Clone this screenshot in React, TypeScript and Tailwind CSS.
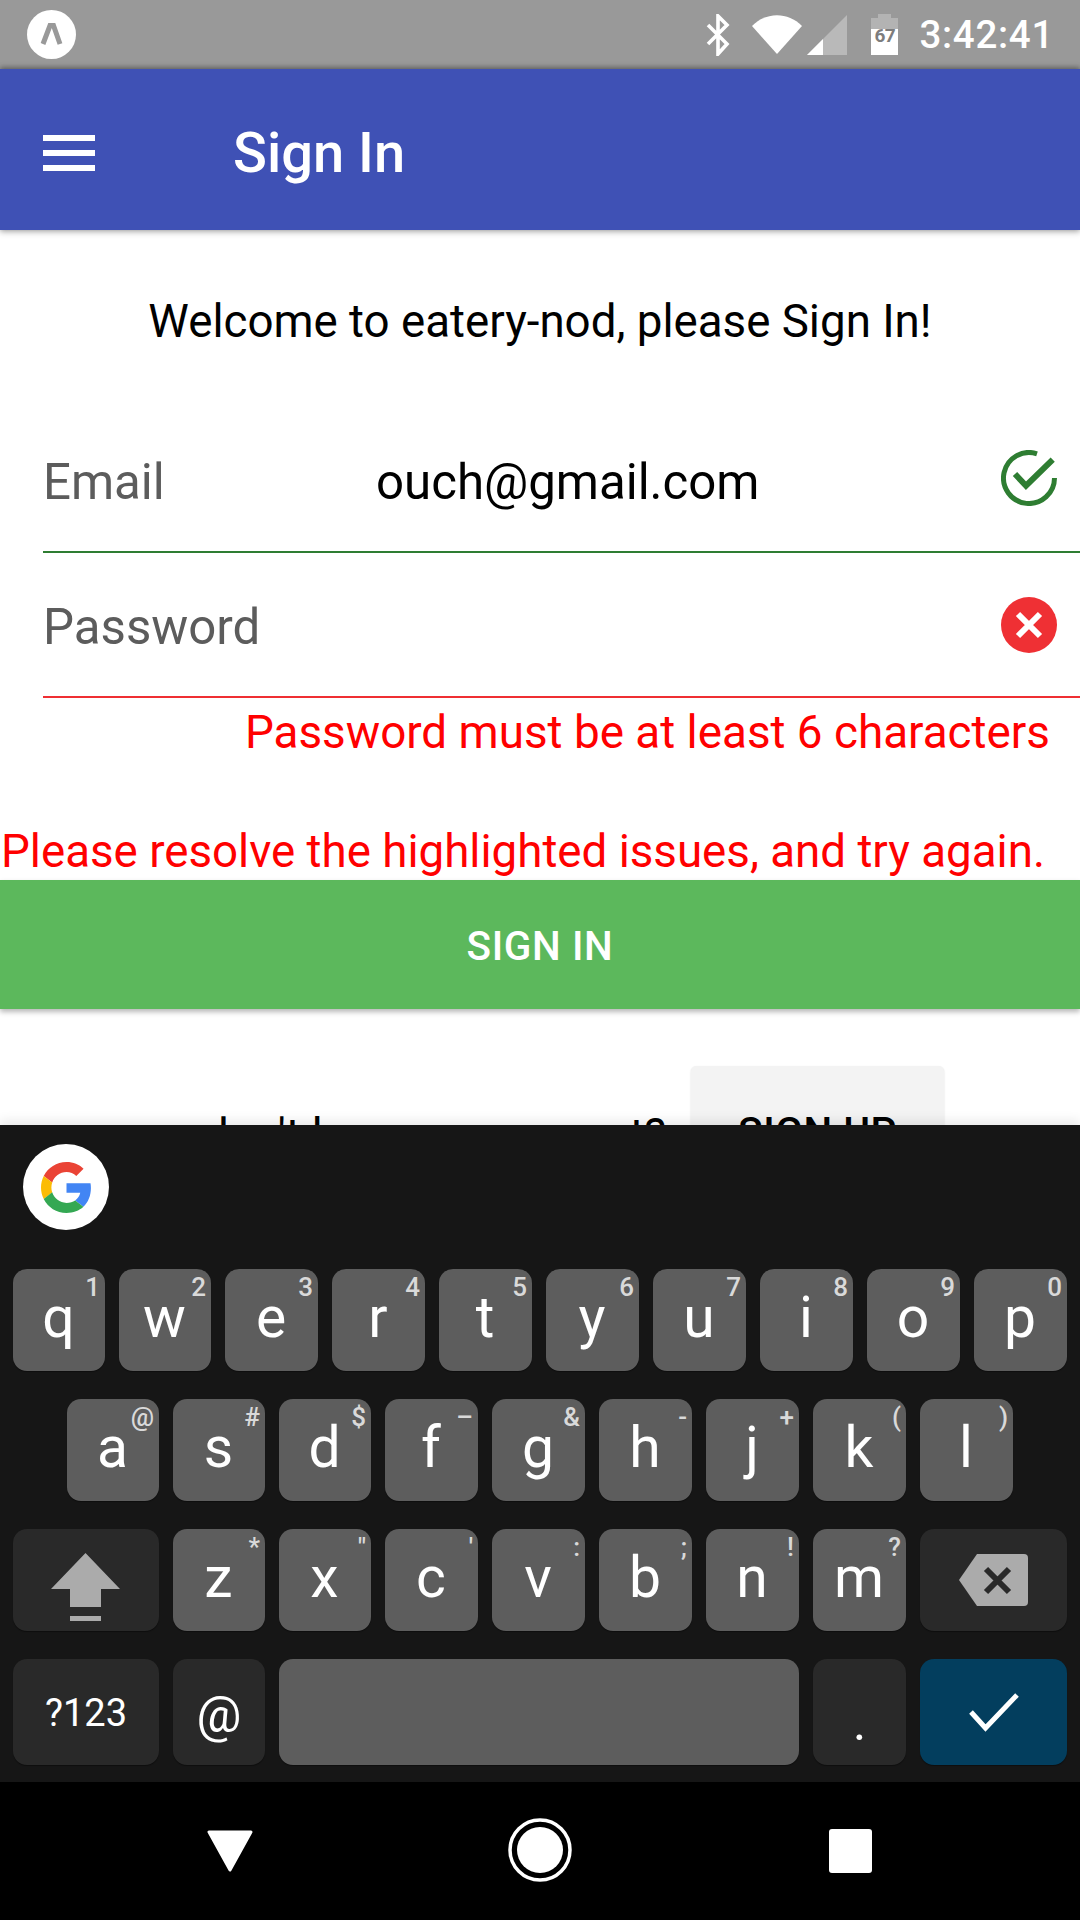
import React from "react";

type K = [string, string];
const row1: K[] = [["q","1"],["w","2"],["e","3"],["r","4"],["t","5"],["y","6"],["u","7"],["i","8"],["o","9"],["p","0"]];
const row2: K[] = [["a","@"],["s","#"],["d","$"],["f","–"],["g","&"],["h","-"],["j","+"],["k","("],["l",")"]];
const row3: K[] = [["z","*"],["x","\""],["c","'"],["v",":"],["b",";"],["n","!"],["m","?"]];
const narrow = "qwasdzx";

function LetterKey({ k }: { k: K }) {
  const w = narrow.includes(k[0]) ? "w-[92px]" : "w-[93px]";
  return (
    <div className={"relative h-[102px] shrink-0 rounded-[14px] bg-[#5d5d5d] shadow-[0_1px_1px_rgba(0,0,0,0.4)] flex items-center justify-center pb-[4px] pr-[1px] text-[57px] text-white " + w}>
      <span>{k[0]}</span>
      <span className="absolute top-[5px] right-[5px] text-[26px] leading-[26px] font-medium text-[#d9d9d9]">{k[1]}</span>
    </div>
  );
}

function FuncKey({ className, children }: { className: string; children: React.ReactNode }) {
  return (
    <div className={"shrink-0 rounded-[14px] shadow-[0_1px_1px_rgba(0,0,0,0.4)] flex items-center justify-center text-white " + className}>
      {children}
    </div>
  );
}

export default function App() {
  return (
    <div className="w-[1080px] h-[1920px] flex flex-col overflow-hidden bg-white font-['Roboto',sans-serif]">
      {/* status bar */}
      <div className="h-[69px] shrink-0 bg-[#999999] flex items-center pl-[27px] pr-[26px]">
        <svg width="49" height="49" viewBox="0 0 49 49" className="mb-[1px]">
          <circle cx="24.5" cy="24.5" r="24.5" fill="#fff" />
          <path d="M16 34 L23 15.5 H26.5 L33 34" fill="none" stroke="#999" strokeWidth="5" />
        </svg>
        <div className="flex-1" />
        <svg width="25" height="42" viewBox="0 0 25 42" className="mr-[21px]">
          <path d="M2 11 L21 30 L12 40 V2 L21 11 L2 30" fill="none" stroke="#fff" strokeWidth="3.6" />
        </svg>
        <svg width="50" height="39" viewBox="0 0 50 39" className="mr-[5px]">
          <path d="M0 11 C14 -3.5 36 -3.5 50 11 L25 39 Z" fill="#fff" />
        </svg>
        <svg width="40" height="40" viewBox="0 0 40 40" className="mr-[24px]">
          <path d="M40 0 V40 H0 Z" fill="#b9b9b9" />
          <path d="M16 24 V40 H0 Z" fill="#fff" />
        </svg>
        <div className="relative w-[27px] h-[41px] mr-[21px] flex flex-col items-center">
          <div className="w-[13px] h-[4px] bg-[#b3b3b3]" />
          <div className="w-[27px] h-[11px] bg-[#b3b3b3]" />
          <div className="w-[27px] h-[26px] bg-white" />
          <span className="absolute left-0 right-0 top-[12px] text-center text-[19px] leading-[20px] font-bold tracking-[-0.5px] text-[#7d7d7d]">67</span>
        </div>
        <span className="text-[38.5px] leading-[69px] font-medium tracking-[0.7px] text-white">3:42:41</span>
      </div>

      {/* app bar */}
      <div className="relative h-[161px] shrink-0 bg-[#3f51b5] shadow-[0_2px_6px_rgba(0,0,0,0.3),0_-2px_5px_rgba(0,0,0,0.3)] flex items-center pl-[43px] pt-[6px]">
        <div className="w-[52px] flex flex-col gap-[9px]">
          <div className="h-[6px] bg-white" />
          <div className="h-[6px] bg-white" />
          <div className="h-[6px] bg-white" />
        </div>
        <span className="ml-[138px] text-[56px] leading-[62px] font-medium text-white">Sign In</span>
      </div>

      {/* content */}
      <main className="flex-1 min-h-0 overflow-hidden flex flex-col">
        <p className="mt-[65px] shrink-0 text-center text-[45.7px] leading-[53px] text-black">Welcome to eatery-nod, please Sign In!</p>

        <div className="mt-[60px] shrink-0 ml-[43px] h-[145px] border-b-2 border-[#2e7d32] flex items-center pr-[23px]">
          <span className="w-[333px] pt-[6px] text-[49.2px] text-[#5c5c5c]">Email</span>
          <span className="flex-1 pt-[6px] text-[49.2px] text-black">ouch@gmail.com</span>
          <svg width="56" height="56" viewBox="0 0 56 56" className="mb-[3px]">
            <path d="M53.5 28 A25.5 25.5 0 1 1 36 3.8" fill="none" stroke="#2e7d32" strokeWidth="5" />
            <path d="M14 24 L25 35.7 L51.7 9.7" fill="none" stroke="#2e7d32" strokeWidth="6" />
          </svg>
        </div>

        <div className="shrink-0 ml-[43px] h-[145px] border-b-2 border-[#ef2f33] flex items-center pr-[23px]">
          <span className="flex-1 pt-[7px] text-[49.2px] text-[#5c5c5c]">Password</span>
          <svg width="56" height="56" viewBox="0 0 56 56">
            <circle cx="28" cy="28" r="28" fill="#ef3034" />
            <path d="M17 17 L39 39 M39 17 L17 39" stroke="#fff" strokeWidth="6" />
          </svg>
        </div>

        <p className="mt-[8px] shrink-0 pr-[30px] text-right text-[45.8px] leading-[53px] text-[#ff0000]">Password must be at least 6 characters</p>
        <p className="mt-[66px] shrink-0 pl-[1px] text-[45.7px] leading-[53px] text-[#ff0000] whitespace-nowrap">Please resolve the highlighted issues, and try again.</p>

        <div className="mt-[2px] h-[129px] shrink-0 bg-[#5cb85c] shadow-[0_3px_5px_rgba(0,0,0,0.28)] flex items-center justify-center pt-[3px] text-[40.5px] font-medium tracking-[0.6px] text-white">
          SIGN IN
        </div>

        <div className="mt-[57px] flex pl-[203px] shrink-0">
          <span className="w-[488px] h-[129px] pt-[5px] text-[45.7px] leading-[129px] text-black whitespace-nowrap">don't have an account?</span>
          <div className="w-[253px] h-[129px] rounded-[5px] bg-[#f3f3f3] shadow-[0_1px_2px_rgba(0,0,0,0.15)] flex items-center justify-center pt-[3px] text-[40.5px] font-medium tracking-[0.6px] text-black">
            SIGN UP
          </div>
        </div>
      </main>

      {/* keyboard */}
      <div className="relative h-[657px] shrink-0 bg-[#161616] shadow-[0_-5px_10px_rgba(0,0,0,0.08)] flex flex-col">
        <div className="h-[144px] pt-[19px] pl-[23px]">
          <div className="w-[86px] h-[86px] rounded-full bg-white flex items-center justify-center">
            <svg width="51" height="51" viewBox="0 0 48 48">
              <path fill="#EA4335" d="M24 9.5c3.54 0 6.71 1.22 9.21 3.6l6.85-6.85C35.9 2.38 30.47 0 24 0 14.62 0 6.51 5.38 2.56 13.22l7.98 6.19C12.43 13.72 17.74 9.5 24 9.5z" />
              <path fill="#4285F4" d="M46.98 24.55c0-1.57-.15-3.09-.38-4.55H24v9.02h12.94c-.58 2.96-2.26 5.48-4.78 7.18l7.73 6c4.51-4.18 7.09-10.36 7.09-17.65z" />
              <path fill="#FBBC05" d="M10.53 28.59c-.48-1.45-.76-2.99-.76-4.59s.27-3.14.76-4.59l-7.98-6.19C.92 16.46 0 20.12 0 24c0 3.88.92 7.54 2.56 10.78l7.97-6.19z" />
              <path fill="#34A853" d="M24 48c6.48 0 11.93-2.13 15.89-5.81l-7.73-6c-2.15 1.45-4.92 2.3-8.16 2.3-6.26 0-11.57-4.22-13.47-9.91l-7.98 6.19C6.51 42.62 14.62 48 24 48z" />
            </svg>
          </div>
        </div>

        <div className="flex gap-[14px] pl-[13px]">
          {row1.map((k) => <LetterKey key={k[0]} k={k} />)}
        </div>
        <div className="mt-[28px] flex gap-[14px] pl-[67px]">
          {row2.map((k) => <LetterKey key={k[0]} k={k} />)}
        </div>
        <div className="mt-[28px] flex gap-[14px] pl-[13px]">
          <FuncKey className="w-[146px] h-[102px] bg-[#292929] pt-[14px] pr-[2px]">
            <svg width="69" height="68" viewBox="0 0 69 68">
              <path d="M34.5 0 L69 36 H50 V54 H19 V36 H0 Z M19 63 H50 V68 H19 Z" fill="#ababab" />
            </svg>
          </FuncKey>
          {row3.map((k) => <LetterKey key={k[0]} k={k} />)}
          <FuncKey className="w-[147px] h-[102px] bg-[#292929]">
            <svg width="69" height="52" viewBox="0 0 69 52">
              <path d="M18 0 H65 Q69 0 69 4 V48 Q69 52 65 52 H18 L0 26 Z" fill="#ababab" />
              <path d="M27 15 L50 38 M50 15 L27 38" stroke="#292929" strokeWidth="6" />
            </svg>
          </FuncKey>
        </div>
        <div className="mt-[28px] flex gap-[14px] pl-[13px]">
          <FuncKey className="w-[146px] h-[106px] bg-[#292929] pt-[3px] text-[38px]">?123</FuncKey>
          <FuncKey className="w-[92px] h-[106px] bg-[#292929] text-[50px] pt-[7px]">@</FuncKey>
          <div className="w-[520px] h-[106px] shrink-0 rounded-[14px] bg-[#5d5d5d] shadow-[0_1px_1px_rgba(0,0,0,0.4)]" />
          <FuncKey className="w-[93px] h-[106px] bg-[#292929] text-[50px] pt-[22px]">.</FuncKey>
          <FuncKey className="w-[147px] h-[106px] bg-[#033e5e]">
            <svg width="50" height="39" viewBox="0 0 50 39">
              <path d="M2 19 L16.5 35 L48 2" fill="none" stroke="#fff" strokeWidth="5" />
            </svg>
          </FuncKey>
        </div>
      </div>

      {/* nav bar */}
      <div className="h-[138px] shrink-0 bg-black grid grid-cols-3 items-center px-[75px] pb-[2px]">
        <div className="flex justify-center">
          <svg width="48" height="42" viewBox="0 0 48 42" className="mt-[1px]">
            <path d="M3 2 H45 L24 40 Z" fill="#fff" stroke="#fff" strokeWidth="3" strokeLinejoin="round" />
          </svg>
        </div>
        <div className="flex justify-center">
          <svg width="64" height="64" viewBox="0 0 64 64">
            <circle cx="32" cy="32" r="30" fill="none" stroke="#fff" strokeWidth="3.5" />
            <circle cx="32" cy="32" r="23" fill="#fff" />
          </svg>
        </div>
        <div className="flex justify-center">
          <div className="w-[43px] h-[44px] mt-[2px] rounded-[3px] bg-white" />
        </div>
      </div>
    </div>
  );
}
